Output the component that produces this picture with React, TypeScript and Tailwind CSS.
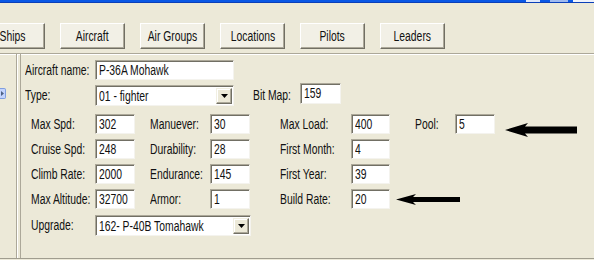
import React from "react";

const T = ({ children, c = "origin-left" }: { children: React.ReactNode; c?: string }) => (
  <span className={`inline-block whitespace-nowrap scale-x-[0.74] ${c}`}>{children}</span>
);

const Input = ({ v, w, h = "h-[20px]" }: { v: string; w: string; h?: string }) => (
  <div
    className={`${w} ${h} shrink-0 bg-white border border-t-[#aca899] border-l-[#aca899] border-b-[#f4f3ee] border-r-[#f4f3ee] shadow-[inset_1px_1px_0_#716f64] flex items-start pl-[3px] pt-[1px] leading-[16px] overflow-hidden`}
  >
    <T>{v}</T>
  </div>
);

const DropBtn = ({ w }: { w: string }) => (
  <div
    className={`${w} h-full shrink-0 bg-[#ece9d8] border border-t-[#f1efe2] border-l-[#f1efe2] border-b-[#716f64] border-r-[#716f64] shadow-[inset_-1px_-1px_0_#aca899,inset_1px_1px_0_#ffffff] flex items-center justify-center`}
  >
    <svg width="7" height="4" viewBox="0 0 7 4">
      <path d="M0 0 L7 0 L3.5 4 Z" fill="#000" />
    </svg>
  </div>
);

const Select = ({ v, w }: { v: string; w: string }) => (
  <div
    className={`${w} h-[21px] shrink-0 bg-white border border-t-[#aca899] border-l-[#aca899] border-b-[#f4f3ee] border-r-[#f4f3ee] shadow-[inset_1px_1px_0_#716f64] flex items-stretch pt-[2px] pb-[1px] pr-[1px]`}
  >
    <div className="flex-1 pl-[3px] leading-[16px] overflow-hidden">
      <T>{v}</T>
    </div>
    <DropBtn w="w-[16px]" />
  </div>
);

const Btn = ({ t }: { t: string }) => (
  <div className="w-[65px] h-[26px] shrink-0 bg-[#f2f0e6] border border-t-white border-l-white border-b-[#716f64] border-r-[#716f64] shadow-[inset_-1px_-1px_0_#aca899] flex items-center justify-center leading-none">
    <T c="origin-center">{t}</T>
  </div>
);

const Arrow = ({ len, hh, sh }: { len: number; hh: number; sh: number }) => {
  const c = hh / 2;
  const head = Math.round(len * 0.32);
  return (
    <svg width={len} height={hh} viewBox={`0 0 ${len} ${hh}`}>
      <path
        d={`M0 ${c} L${head} 0 L${head - 3} ${c - sh / 2} L${len} ${c - sh / 2} L${len} ${c + sh / 2} L${head - 3} ${c + sh / 2} L${head} ${hh} Z`}
        fill="#000"
      />
    </svg>
  );
};

const Label = ({ t, w }: { t: string; w: string }) => (
  <div className={`${w} shrink-0 leading-none`}>
    <T>{t}</T>
  </div>
);

export default function App() {
  return (
    <div className="w-[594px] h-[260px] overflow-hidden bg-[#ece9d8] text-[#111] text-[14px] font-['Liberation_Sans',Arial,sans-serif] flex flex-col">
      {/* title bar remnant */}
      <div className="h-[3px] shrink-0 bg-[#0a58e6] border-b border-b-[#0b3fb8] flex">
        <div className="flex-1" />
        <div className="w-[14px] h-[2px] bg-[#dfe8fb] mr-[10px]" />
        <div className="w-[18px] h-[2px] bg-[#9fbaf0] mr-[5px]" />
        <div className="w-[21px] h-[2px] bg-[#eef2fc]" />
      </div>

      {/* tab buttons */}
      <div className="mt-[20px] h-[26px] shrink-0 flex gap-[15px] -ml-[20px]">
        <Btn t="Ships" />
        <Btn t="Aircraft" />
        <Btn t="Air Groups" />
        <Btn t="Locations" />
        <Btn t="Pilots" />
        <Btn t="Leaders" />
      </div>

      {/* body */}
      <div className="mt-[4px] h-[206px] shrink-0 flex border-t border-t-[#aca899] border-b border-b-[#a09d8f] shadow-[inset_0_1px_0_#ffffff]">
        <div className="w-[17px] shrink-0 border-r border-r-[#aca899] shadow-[1px_0_0_#ffffff] flex flex-col">
          <div className="mt-[34px] w-[6px] h-[11px] bg-[#c3d3fd] border border-[#7f9ee0] border-l-0 rounded-r-[2px] flex items-center justify-center">
            <svg width="3" height="5" viewBox="0 0 3 5">
              <path d="M0 0 L3 2.5 L0 5 Z" fill="#4d6185" />
            </svg>
          </div>
        </div>
        <div className="ml-[3px] flex-1 border-l border-l-[#aca899] flex flex-col pt-[6px]">
          {/* row 1 */}
          <div className="h-[20px] flex items-center pl-[4px]">
            <Label t="Aircraft name:" w="w-[70px]" />
            <Input v="P-36A Mohawk" w="w-[139px]" />
          </div>
          {/* row 2 */}
          <div className="mt-[4px] h-[22px] flex items-center pl-[4px]">
            <Label t="Type:" w="w-[70px]" />
            <Select v="01 - fighter" w="w-[139px]" />
            <Label t="Bit Map:" w="ml-[19px] w-[47px]" />
            <div className="-mt-[4px]">
              <Input v="159" w="w-[41px]" h="h-[21px]" />
            </div>
          </div>

          {/* stat rows */}
          <div className="mt-[8px] flex flex-col gap-[5px] pl-[10px]">
            <div className="h-[20px] flex items-center">
              <Label t="Max Spd:" w="w-[64px]" />
              <Input v="302" w="w-[40px]" />
              <Label t="Manuever:" w="ml-[15px] w-[60px]" />
              <Input v="30" w="w-[40px]" />
              <Label t="Max Load:" w="ml-[30px] w-[71px]" />
              <Input v="400" w="w-[39px]" />
              <Label t="Pool:" w="ml-[25px] w-[40px]" />
              <Input v="5" w="w-[40px]" />
              <div className="ml-[10px] mt-[12px] flex">
                <Arrow len={72} hh={14} sh={7} />
              </div>
            </div>
            <div className="h-[20px] flex items-center">
              <Label t="Cruise Spd:" w="w-[64px]" />
              <Input v="248" w="w-[40px]" />
              <Label t="Durability:" w="ml-[15px] w-[60px]" />
              <Input v="28" w="w-[40px]" />
              <Label t="First Month:" w="ml-[30px] w-[71px]" />
              <Input v="4" w="w-[39px]" />
            </div>
            <div className="h-[20px] flex items-center">
              <Label t="Climb Rate:" w="w-[64px]" />
              <Input v="2000" w="w-[40px]" />
              <Label t="Endurance:" w="ml-[15px] w-[60px]" />
              <Input v="145" w="w-[40px]" />
              <Label t="First Year:" w="ml-[30px] w-[71px]" />
              <Input v="39" w="w-[39px]" />
            </div>
            <div className="h-[20px] flex items-center">
              <Label t="Max Altitude:" w="w-[64px]" />
              <Input v="32700" w="w-[40px]" />
              <Label t="Armor:" w="ml-[15px] w-[60px]" />
              <Input v="1" w="w-[40px]" />
              <Label t="Build Rate:" w="ml-[30px] w-[71px]" />
              <Input v="20" w="w-[39px]" />
              <div className="ml-[6px] flex">
                <Arrow len={64} hh={11} sh={5} />
              </div>
            </div>
          </div>

          {/* upgrade */}
          <div className="mt-[6px] h-[20px] flex items-center pl-[10px]">
            <Label t="Upgrade:" w="w-[64px]" />
            <Select v="162- P-40B Tomahawk" w="w-[156px]" />
          </div>
        </div>
      </div>
    </div>
  );
}
